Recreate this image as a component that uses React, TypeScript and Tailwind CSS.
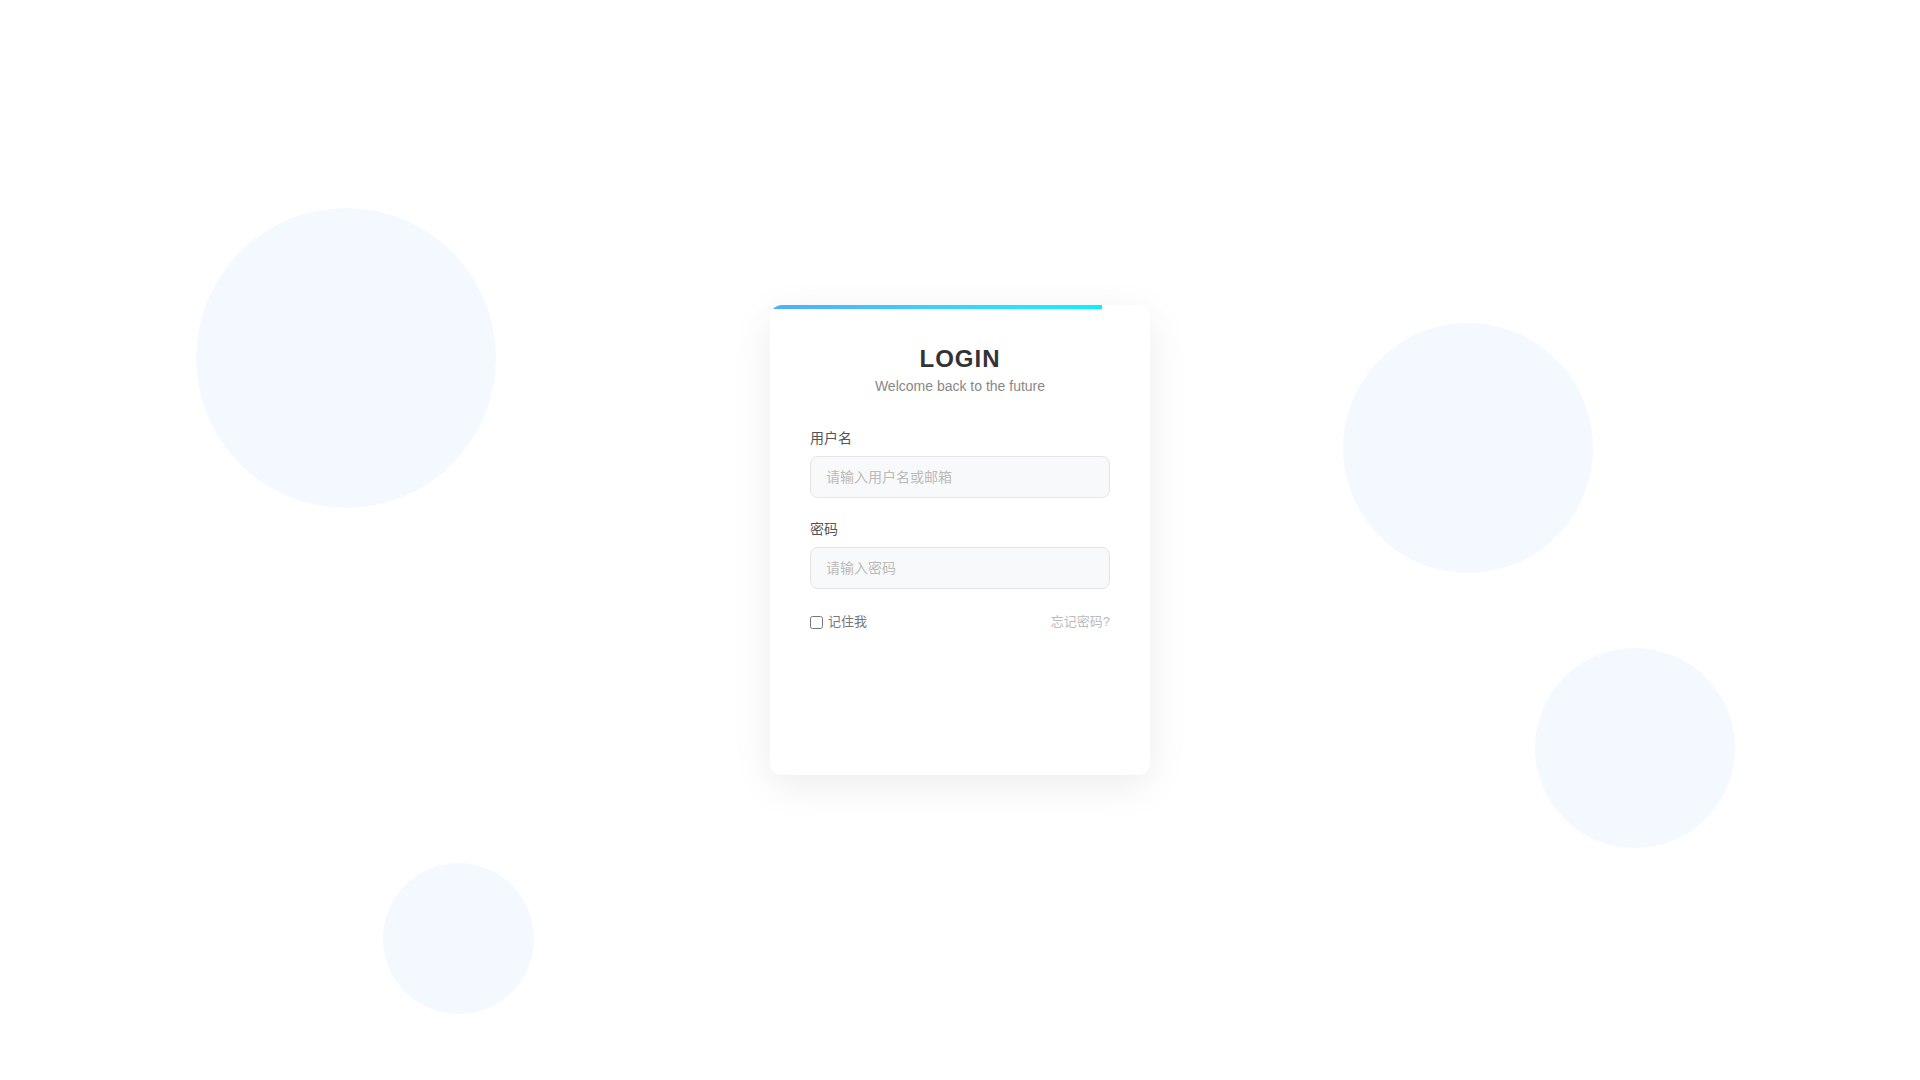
import { useState } from 'react';

const bubbles = [
  'left-[196px] top-[208px] h-[300px] w-[300px]',
  'left-[1343px] top-[323px] h-[250px] w-[250px]',
  'left-[1535px] top-[648px] h-[200px] w-[200px]',
  'left-[383px] top-[863px] h-[151px] w-[151px]',
];

function Field({ label, placeholder, type = 'text' }: { label: string; placeholder: string; type?: string }) {
  return (
    <div className="mb-[21px]">
      <label className="mb-2 block text-[14px] leading-[20px] text-[#555]">{label}</label>
      <input
        type={type}
        placeholder={placeholder}
        className="block h-[42px] w-full rounded-lg border border-[#e1e4e8] bg-[#f8f9fa] px-[15px] text-[14px] text-[#333] outline-none placeholder:text-[#bbb]"
      />
    </div>
  );
}

export default function App() {
  const [remember, setRemember] = useState(false);

  return (
    <div className="relative flex h-screen w-full items-center justify-center overflow-hidden bg-white font-['Liberation_Sans','Noto_Sans_CJK_SC',sans-serif]">
      {bubbles.map((cls) => (
        <div key={cls} className={`absolute rounded-full bg-[#f4f9ff] ${cls}`} />
      ))}

      <div className="relative z-10 h-[470px] w-[380px] overflow-hidden rounded-xl bg-white px-10 pt-10 shadow-[0_10px_40px_rgba(0,0,0,0.08)]">
        <div className="absolute left-0 top-0 h-1 w-[332px] bg-gradient-to-r from-[#4facfe] to-[#00f2fe]" />

        <div className="mb-[34px] text-center">
          <h2 className="mb-[6px] text-[24px] font-bold leading-[27px] tracking-[1px] text-[#333]">LOGIN</h2>
          <p className="text-[14px] leading-[16px] text-[#888]">Welcome back to the future</p>
        </div>

        <Field label="用户名" placeholder="请输入用户名或邮箱" />
        <Field label="密码" placeholder="请输入密码" type="password" />

        <div className="mt-[23px] flex h-5 items-center justify-between text-[13px]">
          <label className="flex items-center gap-[5px] text-[#777]">
            <input
              type="checkbox"
              checked={remember}
              onChange={(e) => setRemember(e.target.checked)}
              className="m-0 h-[13px] w-[13px]"
            />
            记住我
          </label>
          <a href="#" className="text-[#bbb]">
            忘记密码?
          </a>
        </div>
      </div>
    </div>
  );
}
